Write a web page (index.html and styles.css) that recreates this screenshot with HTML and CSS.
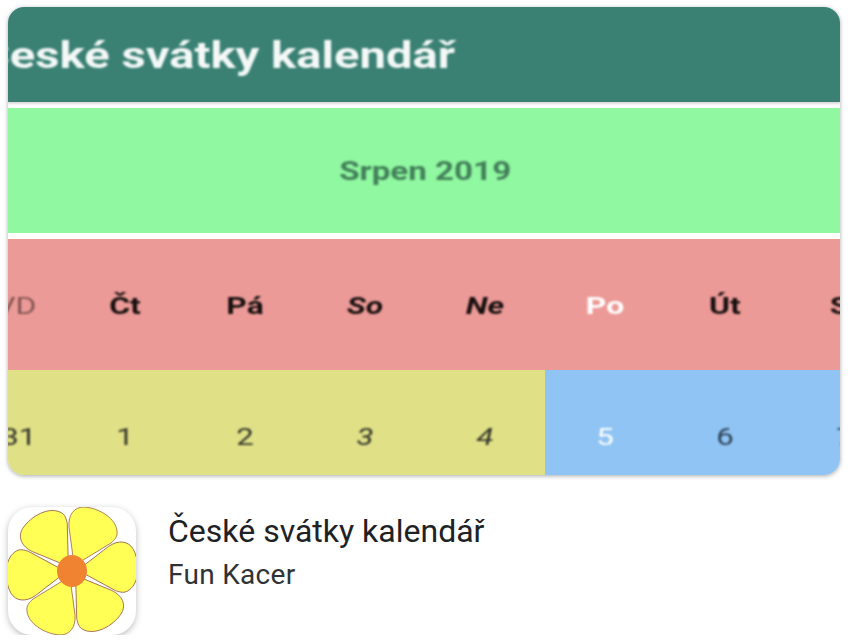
FILE: index.html
```html
<!DOCTYPE html>
<html lang="cs">
<head>
    <meta charset="UTF-8">
    <meta name="viewport" content="width=device-width, initial-scale=1.0">
    <title>České svátky kalendář</title>
    <link rel="stylesheet" href="styles.css">
</head>
<body>

<div class="shot">
    <div class="shot-title"><span>České svátky kalendář</span></div>
    <div class="shot-month"><span>Srpen 2019</span></div>

    <div class="shot-days">
        <span class="first muted">VD</span>
        <span>Čt</span>
        <span>Pá</span>
        <span class="weekend">So</span>
        <span class="weekend">Ne</span>
        <span class="today">Po</span>
        <span>Út</span>
        <span>St</span>
    </div>

    <div class="shot-dates">
        <span class="first">31</span>
        <span>1</span>
        <span>2</span>
        <span class="weekend">3</span>
        <span class="weekend">4</span>
        <span class="today">5</span>
        <span class="next">6</span>
        <span class="next">7</span>
    </div>
</div>

<div class="app">
    <div class="app-icon">
        <svg viewBox="0 0 128 128" width="128" height="128">
            <g fill="#ffff55" stroke="#8f4a3c" stroke-width="0.7">
                <path id="petal" d="M65 50 L61 20 C60 8 66 0 76 0 C92 1 108 12 109 24 C110 30 106 33 103 36 L72 55 Z"/>
                <use href="#petal" transform="rotate(60 64 64)"/>
                <use href="#petal" transform="rotate(120 64 64)"/>
                <use href="#petal" transform="rotate(180 64 64)"/>
                <use href="#petal" transform="rotate(240 64 64)"/>
                <use href="#petal" transform="rotate(300 64 64)"/>
            </g>
            <ellipse cx="64" cy="64" rx="15" ry="16" fill="#f08332"/>
        </svg>
    </div>
    <div class="app-text">
        <div class="app-name">České svátky kalendář</div>
        <div class="app-dev">Fun Kacer</div>
    </div>
</div>

</body>
</html>
```

FILE: styles.css
```css
/* Page */
body {
    margin: 0;
    padding: 7px 8px 0;
    background-color: #ffffff;
    font-family: Roboto, "Liberation Sans", sans-serif;
}

/* Screenshot card, its texts are stretched and soft like a scaled picture */
.shot {
    height: 468px;
    border-radius: 16px;
    overflow: hidden;
    background-color: #ffffff;
    box-shadow: 0 1px 4px rgba(60, 64, 67, 0.45);
    display: flex;
    flex-direction: column;
}

.shot span {
    display: block;
    filter: blur(0.8px);
    transform: scaleX(1.3);
}

.shot-title {
    height: 95px;
    flex: none;
    background-color: #3a8174;
    color: #f4f8f7;
    font-size: 36px;
    font-weight: 700;
    white-space: nowrap;
    display: flex;
    align-items: center;
    box-shadow: 0 2px 2px rgba(0, 0, 0, 0.15);
}

.shot-title span {
    margin-left: -29px;
    padding-top: 2px;
    transform: scaleX(1.31);
    transform-origin: left center;
}

.shot-month {
    height: 125px;
    flex: none;
    box-sizing: border-box;
    margin-top: 6px;
    padding: 1px 0 0 3px;
    background-color: #90f8a0;
    color: #43805a;
    font-size: 25.5px;
    font-weight: 700;
    display: flex;
    align-items: center;
    justify-content: center;
}

/* Week grid, the last column is cut off by the card */
.shot-days, .shot-dates {
    display: grid;
    grid-template-columns: 57px repeat(7, 120px);
    align-items: center;
    text-align: center;
    flex: none;
}

.shot-days {
    height: 131px;
    margin-top: 6px;
    background-color: #ec9a97;
    color: #16100f;
    font-size: 24.5px;
    font-weight: 700;
    padding-top: 2px;
    box-sizing: border-box;
}

.shot-dates {
    height: 105px;
    padding-top: 28px;
    box-sizing: border-box;
    background: linear-gradient(90deg, #e0e087 537px, #90c4f4 537px);
    color: #33362a;
    font-size: 24px;
    font-weight: 400;
}

.shot .first {
    text-align: right;
    padding-right: 22px;
    white-space: nowrap;
    transform-origin: right center;
}

.shot .muted {
    font-weight: 400;
    opacity: 0.5;
}

.weekend {
    font-style: italic;
}

.shot .today {
    color: #ffffff;
}

.shot-dates .next {
    color: #2e4358;
}

/* App row */
.app {
    display: flex;
    margin-top: 32px;
}

.app-icon {
    width: 128px;
    height: 128px;
    flex: none;
    border-radius: 24px;
    background-color: #ffffff;
    box-shadow: 0 2px 6px rgba(60, 64, 67, 0.35);
}

.app-icon svg {
    display: block;
}

.app-text {
    margin-left: 32px;
    padding-top: 4px;
}

.app-name {
    font-size: 32px;
    line-height: 40px;
    color: #202124;
}

.app-dev {
    margin-top: 6px;
    font-size: 28px;
    letter-spacing: 0.3px;
    line-height: 36px;
    color: #303336;
}
```
